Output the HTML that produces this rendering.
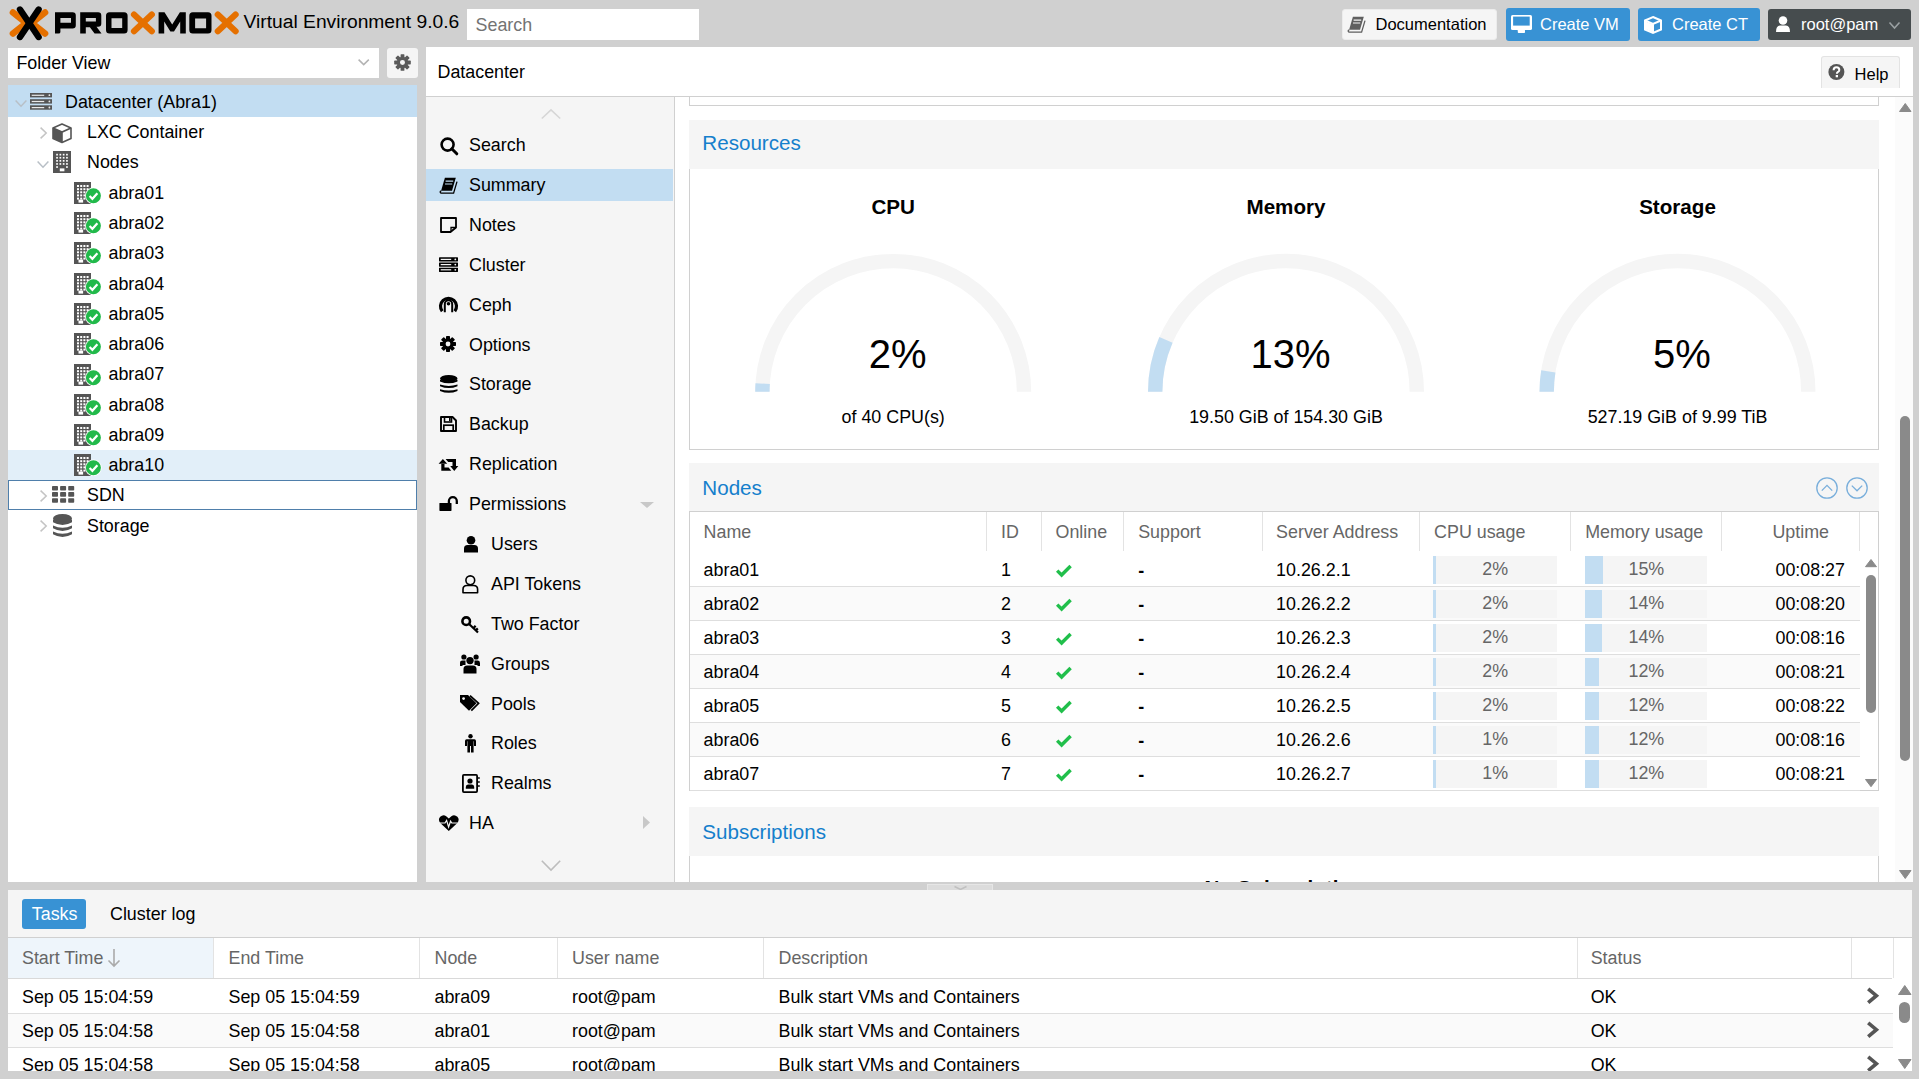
<!DOCTYPE html>
<html><head><meta charset="utf-8"><style>
*{box-sizing:border-box;margin:0;padding:0}
html,body{width:1919px;height:1079px;overflow:hidden;background:#d0d0d0;font-family:"Liberation Sans",sans-serif;font-size:17.875px;color:#000}
.abs{position:absolute}
.t{position:absolute;white-space:nowrap;line-height:1}
svg{position:absolute;overflow:visible}
</style></head><body>
<svg style="left:0px;top:0px;" width="240" height="47" viewBox="0 0 240 47">
<g fill="none" stroke-linecap="round">
<path d="M13 12.5 L26.2 23 L13 33.5" stroke="#e57000" stroke-width="6.6" stroke-linejoin="miter"/>
<path d="M45 12.5 L31.8 23 L45 33.5" stroke="#e57000" stroke-width="6.6" stroke-linejoin="miter"/>
<path d="M20 9.5 L38.6 37" stroke="#000" stroke-width="6.4"/>
<path d="M38.6 9.5 L20 37" stroke="#000" stroke-width="6.4"/>
</g>
<g fill="#000" fill-rule="evenodd">
<path d="M55 12.3 H72.6 Q75.8 12.3 75.8 15.5 V25.2 Q75.8 28.4 72.6 28.4 H60.4 V32 Q60.4 33.6 58.5 33.6 H55 Z M60.4 18 V22.7 H71 V18 Z"/>
<path d="M80.2 12.3 H98.1 Q101.3 12.3 101.3 15.5 V23.6 Q101.3 26.8 98.1 26.8 H96.5 L101.5 33.6 H94.6 L89.9 27.2 H85.8 V33.6 H80.2 Z M85.8 18 V21.6 H95.9 V18 Z"/>
<path d="M109.5 12.3 H124.1 Q127.6 12.3 127.6 15.8 V30.1 Q127.6 33.6 124.1 33.6 H109.5 Q106 33.6 106 30.1 V15.8 Q106 12.3 109.5 12.3 Z M111.5 18.2 V27.9 H122.2 V18.2 Z"/>
<path d="M158.6 12.3 H164.5 L172.2 24.5 L179.9 12.3 H185.8 V33.6 H180.2 V21.5 L174 31.6 H170.4 L164.2 21.5 V33.6 H158.6 Z"/>
<path d="M192.8 12.3 H208 Q211.5 12.3 211.5 15.8 V30.1 Q211.5 33.6 208 33.6 H192.8 Q189.3 33.6 189.3 30.1 V15.8 Q189.3 12.3 192.8 12.3 Z M195.1 18.4 V28.3 H206.1 V18.4 Z"/>
</g>
<g fill="none" stroke="#e57000" stroke-width="6.2" stroke-linecap="round">
<path d="M134 14.6 L151.8 31.2 M151.8 14.6 L134 31.2"/>
<path d="M217.8 14.6 L235.6 31.2 M235.6 14.6 L217.8 31.2"/>
</g>
</svg>
<div class="t" style="left:243.5px;top:12px;font-size:19.25px;">Virtual Environment 9.0.6</div>
<div class="abs" style="left:467px;top:9px;width:232px;height:31px;background:#fff;"></div>
<div class="t" style="left:475.6px;top:16.5px;color:#737373;">Search</div>
<div class="abs" style="left:1342px;top:9px;width:155px;height:31px;background:#f5f5f5;border-radius:3px;border:1px solid #ececec"></div>
<svg style="left:1347px;top:15.5px;" width="18" height="17" viewBox="0 0 18 17"><path d="M5.9 0.7 H16.8 L13 13.8 H2.1 Z" fill="#5f5f5f"/><path d="M2.3 13.8 Q0.9 14.2 1.2 15.3 Q1.5 16.1 2.4 16.1 H14.6 L18 4.6" fill="none" stroke="#5f5f5f" stroke-width="1.3"/><path d="M6.6 4.1 H14.2 M6 7 H13.2" stroke="#f5f5f5" stroke-width="1.2"/></svg>
<div class="t" style="left:1375.5px;top:16px;font-size:16.5px;">Documentation</div>
<div class="abs" style="left:1506px;top:8px;width:124px;height:33px;background:#3892d4;border-radius:3px"></div>
<svg style="left:1511.1px;top:14.7px;" width="21" height="18" viewBox="0 0 21 18"><rect x="0" y="0" width="21" height="15" rx="1.6" fill="#fff"/><rect x="2.1" y="1.6" width="16.6" height="9" fill="#3892d4"/><rect x="6.8" y="14.5" width="7.2" height="3.6" rx="0.8" fill="#fff"/></svg>
<div class="t" style="left:1540px;top:16px;font-size:16.5px;color:#fff;">Create VM</div>
<div class="abs" style="left:1638px;top:8px;width:122px;height:33px;background:#3892d4;border-radius:3px"></div>
<svg style="left:1644px;top:16px;" width="18" height="18" viewBox="0 0 18 18"><path d="M9 1 L17 4.5 V13.5 L9 17 L1 13.5 V4.5 Z" fill="none" stroke="#fff" stroke-width="2"/><path d="M1 4.5 L9 8 L17 4.5 M9 8 V17" fill="none" stroke="#fff" stroke-width="2"/><path d="M1.5 5.5 L9 8.5 V16.5 L1.5 13 Z" fill="#fff"/></svg>
<div class="t" style="left:1672px;top:16px;font-size:16.5px;color:#fff;">Create CT</div>
<div class="abs" style="left:1768px;top:9px;width:143px;height:31px;background:#464c4e;border-radius:3px"></div>
<svg style="left:1776px;top:16px;" width="14" height="16" viewBox="0 0 14 16"><circle cx="7" cy="4.5" r="4.3" fill="#fff"/><path d="M0 16 Q0 9.5 4 9.5 L10 9.5 Q14 9.5 14 16 Z" fill="#fff"/></svg>
<div class="t" style="left:1801px;top:16px;font-size:16.5px;color:#fff;">root@pam</div>
<svg style="left:1889px;top:22px;" width="11" height="7" viewBox="0 0 11 7"><path d="M0.5 0.5 L5.5 6 L10.5 0.5" fill="none" stroke="#9aa0a2" stroke-width="1.6"/></svg>
<div class="abs" style="left:8px;top:48px;width:371px;height:30px;background:#fff;"></div>
<div class="t" style="left:16.4px;top:54.5px;">Folder View</div>
<svg style="left:357.7px;top:58.7px;" width="12" height="7" viewBox="0 0 12 7"><path d="M0.6 0.6 L5.7 5.6 L10.8 0.6" fill="none" stroke="#b3b3b3" stroke-width="1.5"/></svg>
<div class="abs" style="left:387px;top:48px;width:31px;height:30px;background:#f5f5f5;border-radius:3px"></div>
<svg style="left:394px;top:53.5px;" width="17" height="17" viewBox="0 0 17 17"><rect x="6.6" y="0.1999999999999993" width="3.8" height="4.15" rx="0.6" fill="#5a5a5a" transform="rotate(0 8.5 8.5)"/><rect x="6.6" y="0.1999999999999993" width="3.8" height="4.15" rx="0.6" fill="#5a5a5a" transform="rotate(45 8.5 8.5)"/><rect x="6.6" y="0.1999999999999993" width="3.8" height="4.15" rx="0.6" fill="#5a5a5a" transform="rotate(90 8.5 8.5)"/><rect x="6.6" y="0.1999999999999993" width="3.8" height="4.15" rx="0.6" fill="#5a5a5a" transform="rotate(135 8.5 8.5)"/><rect x="6.6" y="0.1999999999999993" width="3.8" height="4.15" rx="0.6" fill="#5a5a5a" transform="rotate(180 8.5 8.5)"/><rect x="6.6" y="0.1999999999999993" width="3.8" height="4.15" rx="0.6" fill="#5a5a5a" transform="rotate(225 8.5 8.5)"/><rect x="6.6" y="0.1999999999999993" width="3.8" height="4.15" rx="0.6" fill="#5a5a5a" transform="rotate(270 8.5 8.5)"/><rect x="6.6" y="0.1999999999999993" width="3.8" height="4.15" rx="0.6" fill="#5a5a5a" transform="rotate(315 8.5 8.5)"/><circle cx="8.5" cy="8.5" r="5.644000000000001" fill="#5a5a5a"/><circle cx="8.5" cy="8.5" r="2.49" fill="#f5f5f5"/></svg>
<div class="abs" style="left:8px;top:85px;width:409px;height:797px;background:#fff;"></div>
<div class="abs" style="left:8px;top:85px;width:409px;height:31.5px;background:#c2ddf2;"></div>
<div class="abs" style="left:8px;top:449.5px;width:409px;height:30.25px;background:#e2eff9;"></div>
<div class="abs" style="left:8px;top:479.95px;width:409px;height:30.2px;background:transparent;border:1px solid #4f7fab"></div>
<svg style="left:15px;top:100px;" width="12" height="7" viewBox="0 0 12 7"><path d="M0.6 0.6 L6 6.2 L11.4 0.6" fill="none" stroke="#b8bfc6" stroke-width="1.5"/></svg>
<svg style="left:30px;top:93px;" width="22" height="17" viewBox="0 0 22 17"><rect x="0" y="0" width="22" height="4.4" fill="#555"/><rect x="1.7" y="1.7" width="12.5" height="1.2" fill="#e8e8e8"/><circle cx="19.4" cy="2.2" r="0.9" fill="#e8e8e8"/><rect x="0" y="6.2" width="22" height="4.4" fill="#555"/><rect x="1.7" y="7.9" width="12.5" height="1.2" fill="#e8e8e8"/><circle cx="19.4" cy="8.4" r="0.9" fill="#e8e8e8"/><rect x="0" y="12.3" width="22" height="4.4" fill="#555"/><rect x="1.7" y="14.0" width="12.5" height="1.2" fill="#e8e8e8"/><circle cx="19.4" cy="14.5" r="0.9" fill="#e8e8e8"/></svg>
<div class="t" style="left:65px;top:94px;">Datacenter (Abra1)</div>
<svg style="left:39.5px;top:127px;" width="7" height="12" viewBox="0 0 7 12"><path d="M0.6 0.6 L6.2 6 L0.6 11.4" fill="none" stroke="#c4c4c4" stroke-width="1.5"/></svg>
<svg style="left:52px;top:123px;" width="20" height="20" viewBox="0 0 20 20"><path d="M10 1 L19 5 V15.5 L10 19.5 L1 15.5 V5 Z" fill="#fff" stroke="#555" stroke-width="1.6" stroke-linejoin="round"/><path d="M1 5 L10 9 L19 5 M10 9 V19.5" fill="none" stroke="#555" stroke-width="1.6"/><path d="M1 5 L10 9 V19.5 L1 15.5 Z" fill="#555"/></svg>
<div class="t" style="left:87px;top:124.25px;">LXC Container</div>
<svg style="left:37px;top:161px;" width="12" height="7" viewBox="0 0 12 7"><path d="M0.6 0.6 L6 6.2 L11.4 0.6" fill="none" stroke="#b8bfc6" stroke-width="1.5"/></svg>
<svg style="left:53px;top:151px;" width="18" height="22" viewBox="0 0 18 22"><rect x="0" y="0" width="18" height="22" fill="#555"/><rect x="3.20" y="2.80" width="1.7" height="1.7" fill="#fff"/><rect x="6.50" y="2.80" width="1.7" height="1.7" fill="#fff"/><rect x="9.80" y="2.80" width="1.7" height="1.7" fill="#fff"/><rect x="13.10" y="2.80" width="1.7" height="1.7" fill="#fff"/><rect x="3.20" y="5.90" width="1.7" height="1.7" fill="#fff"/><rect x="6.50" y="5.90" width="1.7" height="1.7" fill="#fff"/><rect x="9.80" y="5.90" width="1.7" height="1.7" fill="#fff"/><rect x="13.10" y="5.90" width="1.7" height="1.7" fill="#fff"/><rect x="3.20" y="9.00" width="1.7" height="1.7" fill="#fff"/><rect x="6.50" y="9.00" width="1.7" height="1.7" fill="#fff"/><rect x="9.80" y="9.00" width="1.7" height="1.7" fill="#fff"/><rect x="13.10" y="9.00" width="1.7" height="1.7" fill="#fff"/><rect x="3.20" y="12.10" width="1.7" height="1.7" fill="#fff"/><rect x="6.50" y="12.10" width="1.7" height="1.7" fill="#fff"/><rect x="9.80" y="12.10" width="1.7" height="1.7" fill="#fff"/><rect x="13.10" y="12.10" width="1.7" height="1.7" fill="#fff"/><rect x="3.20" y="15.20" width="1.7" height="1.7" fill="#fff"/><rect x="13.10" y="15.20" width="1.7" height="1.7" fill="#fff"/><rect x="6.8" y="17.4" width="4.6" height="2.9" fill="#fff"/></svg>
<div class="t" style="left:87px;top:153.7px;">Nodes</div>
<svg style="left:74px;top:182px;" width="27" height="22" viewBox="0 0 27 22"><rect x="0" y="0" width="17" height="22" fill="#555"/><rect x="3.0" y="3.0" width="2" height="2" fill="#fff"/><rect x="6.2" y="3.0" width="2" height="2" fill="#fff"/><rect x="9.4" y="3.0" width="2" height="2" fill="#fff"/><rect x="12.6" y="3.0" width="2" height="2" fill="#fff"/><rect x="3.0" y="6.2" width="2" height="2" fill="#fff"/><rect x="6.2" y="6.2" width="2" height="2" fill="#fff"/><rect x="9.4" y="6.2" width="2" height="2" fill="#fff"/><rect x="12.6" y="6.2" width="2" height="2" fill="#fff"/><rect x="3.0" y="9.3" width="2" height="2" fill="#fff"/><rect x="6.2" y="9.3" width="2" height="2" fill="#fff"/><rect x="9.4" y="9.3" width="2" height="2" fill="#fff"/><rect x="12.6" y="9.3" width="2" height="2" fill="#fff"/><rect x="3.0" y="12.4" width="2" height="2" fill="#fff"/><rect x="6.2" y="12.4" width="2" height="2" fill="#fff"/><rect x="9.4" y="12.4" width="2" height="2" fill="#fff"/><rect x="3.0" y="15.6" width="2" height="2" fill="#fff"/><rect x="6.2" y="15.6" width="2" height="2" fill="#fff"/><rect x="9.4" y="15.6" width="2" height="2" fill="#fff"/><rect x="4.5" y="17.6" width="4.6" height="3" fill="#fff"/><circle cx="19.4" cy="13.8" r="8.3" fill="#fff"/><circle cx="19.4" cy="13.8" r="7.5" fill="#21b94a"/><path d="M15.6 14 L18.4 16.8 L23.4 11.2" fill="none" stroke="#fff" stroke-width="2.2"/></svg>
<div class="t" style="left:108.5px;top:184.75px;">abra01</div>
<svg style="left:74px;top:212px;" width="27" height="22" viewBox="0 0 27 22"><rect x="0" y="0" width="17" height="22" fill="#555"/><rect x="3.0" y="3.0" width="2" height="2" fill="#fff"/><rect x="6.2" y="3.0" width="2" height="2" fill="#fff"/><rect x="9.4" y="3.0" width="2" height="2" fill="#fff"/><rect x="12.6" y="3.0" width="2" height="2" fill="#fff"/><rect x="3.0" y="6.2" width="2" height="2" fill="#fff"/><rect x="6.2" y="6.2" width="2" height="2" fill="#fff"/><rect x="9.4" y="6.2" width="2" height="2" fill="#fff"/><rect x="12.6" y="6.2" width="2" height="2" fill="#fff"/><rect x="3.0" y="9.3" width="2" height="2" fill="#fff"/><rect x="6.2" y="9.3" width="2" height="2" fill="#fff"/><rect x="9.4" y="9.3" width="2" height="2" fill="#fff"/><rect x="12.6" y="9.3" width="2" height="2" fill="#fff"/><rect x="3.0" y="12.4" width="2" height="2" fill="#fff"/><rect x="6.2" y="12.4" width="2" height="2" fill="#fff"/><rect x="9.4" y="12.4" width="2" height="2" fill="#fff"/><rect x="3.0" y="15.6" width="2" height="2" fill="#fff"/><rect x="6.2" y="15.6" width="2" height="2" fill="#fff"/><rect x="9.4" y="15.6" width="2" height="2" fill="#fff"/><rect x="4.5" y="17.6" width="4.6" height="3" fill="#fff"/><circle cx="19.4" cy="13.8" r="8.3" fill="#fff"/><circle cx="19.4" cy="13.8" r="7.5" fill="#21b94a"/><path d="M15.6 14 L18.4 16.8 L23.4 11.2" fill="none" stroke="#fff" stroke-width="2.2"/></svg>
<div class="t" style="left:108.5px;top:215.0px;">abra02</div>
<svg style="left:74px;top:242px;" width="27" height="22" viewBox="0 0 27 22"><rect x="0" y="0" width="17" height="22" fill="#555"/><rect x="3.0" y="3.0" width="2" height="2" fill="#fff"/><rect x="6.2" y="3.0" width="2" height="2" fill="#fff"/><rect x="9.4" y="3.0" width="2" height="2" fill="#fff"/><rect x="12.6" y="3.0" width="2" height="2" fill="#fff"/><rect x="3.0" y="6.2" width="2" height="2" fill="#fff"/><rect x="6.2" y="6.2" width="2" height="2" fill="#fff"/><rect x="9.4" y="6.2" width="2" height="2" fill="#fff"/><rect x="12.6" y="6.2" width="2" height="2" fill="#fff"/><rect x="3.0" y="9.3" width="2" height="2" fill="#fff"/><rect x="6.2" y="9.3" width="2" height="2" fill="#fff"/><rect x="9.4" y="9.3" width="2" height="2" fill="#fff"/><rect x="12.6" y="9.3" width="2" height="2" fill="#fff"/><rect x="3.0" y="12.4" width="2" height="2" fill="#fff"/><rect x="6.2" y="12.4" width="2" height="2" fill="#fff"/><rect x="9.4" y="12.4" width="2" height="2" fill="#fff"/><rect x="3.0" y="15.6" width="2" height="2" fill="#fff"/><rect x="6.2" y="15.6" width="2" height="2" fill="#fff"/><rect x="9.4" y="15.6" width="2" height="2" fill="#fff"/><rect x="4.5" y="17.6" width="4.6" height="3" fill="#fff"/><circle cx="19.4" cy="13.8" r="8.3" fill="#fff"/><circle cx="19.4" cy="13.8" r="7.5" fill="#21b94a"/><path d="M15.6 14 L18.4 16.8 L23.4 11.2" fill="none" stroke="#fff" stroke-width="2.2"/></svg>
<div class="t" style="left:108.5px;top:245.25px;">abra03</div>
<svg style="left:74px;top:273px;" width="27" height="22" viewBox="0 0 27 22"><rect x="0" y="0" width="17" height="22" fill="#555"/><rect x="3.0" y="3.0" width="2" height="2" fill="#fff"/><rect x="6.2" y="3.0" width="2" height="2" fill="#fff"/><rect x="9.4" y="3.0" width="2" height="2" fill="#fff"/><rect x="12.6" y="3.0" width="2" height="2" fill="#fff"/><rect x="3.0" y="6.2" width="2" height="2" fill="#fff"/><rect x="6.2" y="6.2" width="2" height="2" fill="#fff"/><rect x="9.4" y="6.2" width="2" height="2" fill="#fff"/><rect x="12.6" y="6.2" width="2" height="2" fill="#fff"/><rect x="3.0" y="9.3" width="2" height="2" fill="#fff"/><rect x="6.2" y="9.3" width="2" height="2" fill="#fff"/><rect x="9.4" y="9.3" width="2" height="2" fill="#fff"/><rect x="12.6" y="9.3" width="2" height="2" fill="#fff"/><rect x="3.0" y="12.4" width="2" height="2" fill="#fff"/><rect x="6.2" y="12.4" width="2" height="2" fill="#fff"/><rect x="9.4" y="12.4" width="2" height="2" fill="#fff"/><rect x="3.0" y="15.6" width="2" height="2" fill="#fff"/><rect x="6.2" y="15.6" width="2" height="2" fill="#fff"/><rect x="9.4" y="15.6" width="2" height="2" fill="#fff"/><rect x="4.5" y="17.6" width="4.6" height="3" fill="#fff"/><circle cx="19.4" cy="13.8" r="8.3" fill="#fff"/><circle cx="19.4" cy="13.8" r="7.5" fill="#21b94a"/><path d="M15.6 14 L18.4 16.8 L23.4 11.2" fill="none" stroke="#fff" stroke-width="2.2"/></svg>
<div class="t" style="left:108.5px;top:275.5px;">abra04</div>
<svg style="left:74px;top:303px;" width="27" height="22" viewBox="0 0 27 22"><rect x="0" y="0" width="17" height="22" fill="#555"/><rect x="3.0" y="3.0" width="2" height="2" fill="#fff"/><rect x="6.2" y="3.0" width="2" height="2" fill="#fff"/><rect x="9.4" y="3.0" width="2" height="2" fill="#fff"/><rect x="12.6" y="3.0" width="2" height="2" fill="#fff"/><rect x="3.0" y="6.2" width="2" height="2" fill="#fff"/><rect x="6.2" y="6.2" width="2" height="2" fill="#fff"/><rect x="9.4" y="6.2" width="2" height="2" fill="#fff"/><rect x="12.6" y="6.2" width="2" height="2" fill="#fff"/><rect x="3.0" y="9.3" width="2" height="2" fill="#fff"/><rect x="6.2" y="9.3" width="2" height="2" fill="#fff"/><rect x="9.4" y="9.3" width="2" height="2" fill="#fff"/><rect x="12.6" y="9.3" width="2" height="2" fill="#fff"/><rect x="3.0" y="12.4" width="2" height="2" fill="#fff"/><rect x="6.2" y="12.4" width="2" height="2" fill="#fff"/><rect x="9.4" y="12.4" width="2" height="2" fill="#fff"/><rect x="3.0" y="15.6" width="2" height="2" fill="#fff"/><rect x="6.2" y="15.6" width="2" height="2" fill="#fff"/><rect x="9.4" y="15.6" width="2" height="2" fill="#fff"/><rect x="4.5" y="17.6" width="4.6" height="3" fill="#fff"/><circle cx="19.4" cy="13.8" r="8.3" fill="#fff"/><circle cx="19.4" cy="13.8" r="7.5" fill="#21b94a"/><path d="M15.6 14 L18.4 16.8 L23.4 11.2" fill="none" stroke="#fff" stroke-width="2.2"/></svg>
<div class="t" style="left:108.5px;top:305.75px;">abra05</div>
<svg style="left:74px;top:333px;" width="27" height="22" viewBox="0 0 27 22"><rect x="0" y="0" width="17" height="22" fill="#555"/><rect x="3.0" y="3.0" width="2" height="2" fill="#fff"/><rect x="6.2" y="3.0" width="2" height="2" fill="#fff"/><rect x="9.4" y="3.0" width="2" height="2" fill="#fff"/><rect x="12.6" y="3.0" width="2" height="2" fill="#fff"/><rect x="3.0" y="6.2" width="2" height="2" fill="#fff"/><rect x="6.2" y="6.2" width="2" height="2" fill="#fff"/><rect x="9.4" y="6.2" width="2" height="2" fill="#fff"/><rect x="12.6" y="6.2" width="2" height="2" fill="#fff"/><rect x="3.0" y="9.3" width="2" height="2" fill="#fff"/><rect x="6.2" y="9.3" width="2" height="2" fill="#fff"/><rect x="9.4" y="9.3" width="2" height="2" fill="#fff"/><rect x="12.6" y="9.3" width="2" height="2" fill="#fff"/><rect x="3.0" y="12.4" width="2" height="2" fill="#fff"/><rect x="6.2" y="12.4" width="2" height="2" fill="#fff"/><rect x="9.4" y="12.4" width="2" height="2" fill="#fff"/><rect x="3.0" y="15.6" width="2" height="2" fill="#fff"/><rect x="6.2" y="15.6" width="2" height="2" fill="#fff"/><rect x="9.4" y="15.6" width="2" height="2" fill="#fff"/><rect x="4.5" y="17.6" width="4.6" height="3" fill="#fff"/><circle cx="19.4" cy="13.8" r="8.3" fill="#fff"/><circle cx="19.4" cy="13.8" r="7.5" fill="#21b94a"/><path d="M15.6 14 L18.4 16.8 L23.4 11.2" fill="none" stroke="#fff" stroke-width="2.2"/></svg>
<div class="t" style="left:108.5px;top:336.0px;">abra06</div>
<svg style="left:74px;top:364px;" width="27" height="22" viewBox="0 0 27 22"><rect x="0" y="0" width="17" height="22" fill="#555"/><rect x="3.0" y="3.0" width="2" height="2" fill="#fff"/><rect x="6.2" y="3.0" width="2" height="2" fill="#fff"/><rect x="9.4" y="3.0" width="2" height="2" fill="#fff"/><rect x="12.6" y="3.0" width="2" height="2" fill="#fff"/><rect x="3.0" y="6.2" width="2" height="2" fill="#fff"/><rect x="6.2" y="6.2" width="2" height="2" fill="#fff"/><rect x="9.4" y="6.2" width="2" height="2" fill="#fff"/><rect x="12.6" y="6.2" width="2" height="2" fill="#fff"/><rect x="3.0" y="9.3" width="2" height="2" fill="#fff"/><rect x="6.2" y="9.3" width="2" height="2" fill="#fff"/><rect x="9.4" y="9.3" width="2" height="2" fill="#fff"/><rect x="12.6" y="9.3" width="2" height="2" fill="#fff"/><rect x="3.0" y="12.4" width="2" height="2" fill="#fff"/><rect x="6.2" y="12.4" width="2" height="2" fill="#fff"/><rect x="9.4" y="12.4" width="2" height="2" fill="#fff"/><rect x="3.0" y="15.6" width="2" height="2" fill="#fff"/><rect x="6.2" y="15.6" width="2" height="2" fill="#fff"/><rect x="9.4" y="15.6" width="2" height="2" fill="#fff"/><rect x="4.5" y="17.6" width="4.6" height="3" fill="#fff"/><circle cx="19.4" cy="13.8" r="8.3" fill="#fff"/><circle cx="19.4" cy="13.8" r="7.5" fill="#21b94a"/><path d="M15.6 14 L18.4 16.8 L23.4 11.2" fill="none" stroke="#fff" stroke-width="2.2"/></svg>
<div class="t" style="left:108.5px;top:366.25px;">abra07</div>
<svg style="left:74px;top:394px;" width="27" height="22" viewBox="0 0 27 22"><rect x="0" y="0" width="17" height="22" fill="#555"/><rect x="3.0" y="3.0" width="2" height="2" fill="#fff"/><rect x="6.2" y="3.0" width="2" height="2" fill="#fff"/><rect x="9.4" y="3.0" width="2" height="2" fill="#fff"/><rect x="12.6" y="3.0" width="2" height="2" fill="#fff"/><rect x="3.0" y="6.2" width="2" height="2" fill="#fff"/><rect x="6.2" y="6.2" width="2" height="2" fill="#fff"/><rect x="9.4" y="6.2" width="2" height="2" fill="#fff"/><rect x="12.6" y="6.2" width="2" height="2" fill="#fff"/><rect x="3.0" y="9.3" width="2" height="2" fill="#fff"/><rect x="6.2" y="9.3" width="2" height="2" fill="#fff"/><rect x="9.4" y="9.3" width="2" height="2" fill="#fff"/><rect x="12.6" y="9.3" width="2" height="2" fill="#fff"/><rect x="3.0" y="12.4" width="2" height="2" fill="#fff"/><rect x="6.2" y="12.4" width="2" height="2" fill="#fff"/><rect x="9.4" y="12.4" width="2" height="2" fill="#fff"/><rect x="3.0" y="15.6" width="2" height="2" fill="#fff"/><rect x="6.2" y="15.6" width="2" height="2" fill="#fff"/><rect x="9.4" y="15.6" width="2" height="2" fill="#fff"/><rect x="4.5" y="17.6" width="4.6" height="3" fill="#fff"/><circle cx="19.4" cy="13.8" r="8.3" fill="#fff"/><circle cx="19.4" cy="13.8" r="7.5" fill="#21b94a"/><path d="M15.6 14 L18.4 16.8 L23.4 11.2" fill="none" stroke="#fff" stroke-width="2.2"/></svg>
<div class="t" style="left:108.5px;top:396.5px;">abra08</div>
<svg style="left:74px;top:424px;" width="27" height="22" viewBox="0 0 27 22"><rect x="0" y="0" width="17" height="22" fill="#555"/><rect x="3.0" y="3.0" width="2" height="2" fill="#fff"/><rect x="6.2" y="3.0" width="2" height="2" fill="#fff"/><rect x="9.4" y="3.0" width="2" height="2" fill="#fff"/><rect x="12.6" y="3.0" width="2" height="2" fill="#fff"/><rect x="3.0" y="6.2" width="2" height="2" fill="#fff"/><rect x="6.2" y="6.2" width="2" height="2" fill="#fff"/><rect x="9.4" y="6.2" width="2" height="2" fill="#fff"/><rect x="12.6" y="6.2" width="2" height="2" fill="#fff"/><rect x="3.0" y="9.3" width="2" height="2" fill="#fff"/><rect x="6.2" y="9.3" width="2" height="2" fill="#fff"/><rect x="9.4" y="9.3" width="2" height="2" fill="#fff"/><rect x="12.6" y="9.3" width="2" height="2" fill="#fff"/><rect x="3.0" y="12.4" width="2" height="2" fill="#fff"/><rect x="6.2" y="12.4" width="2" height="2" fill="#fff"/><rect x="9.4" y="12.4" width="2" height="2" fill="#fff"/><rect x="3.0" y="15.6" width="2" height="2" fill="#fff"/><rect x="6.2" y="15.6" width="2" height="2" fill="#fff"/><rect x="9.4" y="15.6" width="2" height="2" fill="#fff"/><rect x="4.5" y="17.6" width="4.6" height="3" fill="#fff"/><circle cx="19.4" cy="13.8" r="8.3" fill="#fff"/><circle cx="19.4" cy="13.8" r="7.5" fill="#21b94a"/><path d="M15.6 14 L18.4 16.8 L23.4 11.2" fill="none" stroke="#fff" stroke-width="2.2"/></svg>
<div class="t" style="left:108.5px;top:426.75px;">abra09</div>
<svg style="left:74px;top:454px;" width="27" height="22" viewBox="0 0 27 22"><rect x="0" y="0" width="17" height="22" fill="#555"/><rect x="3.0" y="3.0" width="2" height="2" fill="#fff"/><rect x="6.2" y="3.0" width="2" height="2" fill="#fff"/><rect x="9.4" y="3.0" width="2" height="2" fill="#fff"/><rect x="12.6" y="3.0" width="2" height="2" fill="#fff"/><rect x="3.0" y="6.2" width="2" height="2" fill="#fff"/><rect x="6.2" y="6.2" width="2" height="2" fill="#fff"/><rect x="9.4" y="6.2" width="2" height="2" fill="#fff"/><rect x="12.6" y="6.2" width="2" height="2" fill="#fff"/><rect x="3.0" y="9.3" width="2" height="2" fill="#fff"/><rect x="6.2" y="9.3" width="2" height="2" fill="#fff"/><rect x="9.4" y="9.3" width="2" height="2" fill="#fff"/><rect x="12.6" y="9.3" width="2" height="2" fill="#fff"/><rect x="3.0" y="12.4" width="2" height="2" fill="#fff"/><rect x="6.2" y="12.4" width="2" height="2" fill="#fff"/><rect x="9.4" y="12.4" width="2" height="2" fill="#fff"/><rect x="3.0" y="15.6" width="2" height="2" fill="#fff"/><rect x="6.2" y="15.6" width="2" height="2" fill="#fff"/><rect x="9.4" y="15.6" width="2" height="2" fill="#fff"/><rect x="4.5" y="17.6" width="4.6" height="3" fill="#fff"/><circle cx="19.4" cy="13.8" r="8.3" fill="#fff"/><circle cx="19.4" cy="13.8" r="7.5" fill="#21b94a"/><path d="M15.6 14 L18.4 16.8 L23.4 11.2" fill="none" stroke="#fff" stroke-width="2.2"/></svg>
<div class="t" style="left:108.5px;top:457.0px;">abra10</div>
<svg style="left:39.7px;top:489.75px;" width="7" height="12" viewBox="0 0 7 12"><path d="M0.6 0.6 L6.2 6 L0.6 11.4" fill="none" stroke="#c4c4c4" stroke-width="1.5"/></svg>
<svg style="left:52px;top:485.75px;" width="22" height="17" viewBox="0 0 22 17"><rect x="0.0" y="0.0" width="6" height="4.6" rx="0.8" fill="#555"/><rect x="8.1" y="0.0" width="6" height="4.6" rx="0.8" fill="#555"/><rect x="16.2" y="0.0" width="6" height="4.6" rx="0.8" fill="#555"/><rect x="0.0" y="6.1" width="6" height="4.6" rx="0.8" fill="#555"/><rect x="8.1" y="6.1" width="6" height="4.6" rx="0.8" fill="#555"/><rect x="16.2" y="6.1" width="6" height="4.6" rx="0.8" fill="#555"/><rect x="0.0" y="12.2" width="6" height="4.6" rx="0.8" fill="#555"/><rect x="8.1" y="12.2" width="6" height="4.6" rx="0.8" fill="#555"/><rect x="16.2" y="12.2" width="6" height="4.6" rx="0.8" fill="#555"/></svg>
<div class="t" style="left:87px;top:487.25px;">SDN</div>
<svg style="left:39.7px;top:520.0px;" width="7" height="12" viewBox="0 0 7 12"><path d="M0.6 0.6 L6.2 6 L0.6 11.4" fill="none" stroke="#c4c4c4" stroke-width="1.5"/></svg>
<svg style="left:53px;top:514.0px;" width="19" height="22" viewBox="0 0 19 22"><ellipse cx="9.5" cy="4.4" rx="9.5" ry="4.4" fill="#555"/><path d="M0 5.50 Q9.5 10.34 19 5.50 V8.36 Q9.5 13.86 0 8.36 Z" fill="#555"/><path d="M0 11.44 Q9.5 16.28 19 11.44 V14.30 Q9.5 19.80 0 14.30 Z" fill="#555"/><path d="M0 17.38 Q9.5 22.22 19 17.38 V20.24 Q9.5 25.74 0 20.24 Z" fill="#555"/></svg>
<div class="t" style="left:87px;top:517.5px;">Storage</div>
<div class="abs" style="left:426px;top:47px;width:1487px;height:835px;background:#fff;"></div>
<div class="t" style="left:437.5px;top:64.3px;">Datacenter</div>
<div class="abs" style="left:1821px;top:56px;width:79px;height:32px;background:#f5f5f5;border:1px solid #e3e3e3;border-bottom:none;border-radius:3px 3px 0 0"></div>
<svg style="left:1828.3px;top:63.8px;" width="17" height="16" viewBox="0 0 17 16"><circle cx="8.4" cy="8" r="8" fill="#555"/><path d="M5.6 6.2 Q5.6 3.3 8.5 3.3 Q11.3 3.3 11.3 5.9 Q11.3 7.4 9.7 8.2 Q8.9 8.7 8.9 9.8" fill="none" stroke="#fff" stroke-width="2"/><rect x="7.7" y="11" width="2.3" height="2.3" fill="#fff"/></svg>
<div class="t" style="left:1854.6px;top:65.6px;font-size:16.5px;">Help</div>
<div class="abs" style="left:426px;top:96px;width:1487px;height:1px;background:#d0d0d0;"></div>
<div class="abs" style="left:426px;top:97px;width:248px;height:785px;background:#f5f5f5;"></div>
<div class="abs" style="left:674px;top:97px;width:1px;height:785px;background:#d0d0d0;"></div>
<div class="abs" style="left:426px;top:168.9px;width:247px;height:32.6px;background:#c2ddf2;"></div>
<svg style="left:541px;top:109px;" width="20" height="10" viewBox="0 0 20 10"><path d="M0.8 9.5 L10 0.8 L19.2 9.5" fill="none" stroke="#d6d6d6" stroke-width="1.6"/></svg>
<svg style="left:541px;top:860px;" width="20" height="11" viewBox="0 0 20 11"><path d="M0.8 0.8 L10 10 L19.2 0.8" fill="none" stroke="#bdbdbd" stroke-width="1.6"/></svg>
<svg style="left:439.5px;top:136.7px;" width="18" height="18" viewBox="0 0 18 18"><circle cx="7.6" cy="7.6" r="6" fill="none" stroke="#000" stroke-width="2.6"/><path d="M11.8 11.8 L16.8 16.8" stroke="#000" stroke-width="3" stroke-linecap="round"/></svg>
<div class="t" style="left:469px;top:137.2px;">Search</div>
<svg style="left:438.5px;top:176.6px;" width="18" height="17" viewBox="0 0 18 17"><path d="M5.9 0.7 H16.8 L13 13.8 H2.1 Z" fill="#000"/><path d="M2.3 13.8 Q0.9 14.2 1.2 15.3 Q1.5 16.1 2.4 16.1 H14.6 L18 4.6" fill="none" stroke="#000" stroke-width="1.3"/><path d="M6.6 4.1 H14.2 M6 7 H13.2" stroke="#c2ddf2" stroke-width="1.2"/></svg>
<div class="t" style="left:469px;top:177.08px;">Summary</div>
<svg style="left:440px;top:217.2px;" width="17" height="16" viewBox="0 0 17 16"><path d="M1 1 H16 V10.5 L10.5 15 H1 Z" fill="none" stroke="#000" stroke-width="1.8" stroke-linejoin="round"/><path d="M16 10.5 H11 V15" fill="none" stroke="#000" stroke-width="1.3"/></svg>
<div class="t" style="left:469px;top:216.96px;">Notes</div>
<svg style="left:439px;top:257px;" width="19" height="15" viewBox="0 0 19 15"><rect x="0" y="0.3" width="19" height="4.2" rx="0.4" fill="#000"/><rect x="1.7" y="1.8" width="10.5" height="1.2" fill="#f5f5f5"/><circle cx="16.3" cy="2.4" r="0.9" fill="#f5f5f5"/><rect x="0" y="5.5" width="19" height="4.2" rx="0.4" fill="#000"/><rect x="1.7" y="7.0" width="10.5" height="1.2" fill="#f5f5f5"/><circle cx="16.3" cy="7.6" r="0.9" fill="#f5f5f5"/><rect x="0" y="10.7" width="19" height="4.2" rx="0.4" fill="#000"/><rect x="1.7" y="12.2" width="10.5" height="1.2" fill="#f5f5f5"/><circle cx="16.3" cy="12.799999999999999" r="0.9" fill="#f5f5f5"/></svg>
<div class="t" style="left:469px;top:256.84px;">Cluster</div>
<svg style="left:439px;top:294px;" width="19" height="18.5" viewBox="0 0 19 18.5"><path d="M3.2 17.2 A8 8 0 1 1 15.8 17.2" fill="none" stroke="#000" stroke-width="3.2"/><path d="M5.8 18.2 V10 A3.7 3.7 0 0 1 13.2 10 V18.2" fill="none" stroke="#000" stroke-width="2"/><circle cx="9.5" cy="9.8" r="1.8" fill="#000"/></svg>
<div class="t" style="left:469px;top:296.72px;">Ceph</div>
<svg style="left:440.2px;top:336.2px;" width="16" height="16" viewBox="0 0 16 16"><rect x="6" y="0" width="4" height="4.4" rx="0.7" fill="#000" transform="rotate(0 8 8)"/><rect x="6" y="0" width="4" height="4.4" rx="0.7" fill="#000" transform="rotate(45 8 8)"/><rect x="6" y="0" width="4" height="4.4" rx="0.7" fill="#000" transform="rotate(90 8 8)"/><rect x="6" y="0" width="4" height="4.4" rx="0.7" fill="#000" transform="rotate(135 8 8)"/><rect x="6" y="0" width="4" height="4.4" rx="0.7" fill="#000" transform="rotate(180 8 8)"/><rect x="6" y="0" width="4" height="4.4" rx="0.7" fill="#000" transform="rotate(225 8 8)"/><rect x="6" y="0" width="4" height="4.4" rx="0.7" fill="#000" transform="rotate(270 8 8)"/><rect x="6" y="0" width="4" height="4.4" rx="0.7" fill="#000" transform="rotate(315 8 8)"/><circle cx="8" cy="8" r="5.6" fill="#000"/><circle cx="8" cy="8" r="2.4" fill="#f5f5f5"/></svg>
<div class="t" style="left:469px;top:336.6px;">Options</div>
<svg style="left:439.6px;top:375px;" width="17.5" height="18.6" viewBox="0 0 17.5 18.6"><ellipse cx="8.75" cy="3.5340000000000003" rx="8.75" ry="3.5340000000000003" fill="#000"/><path d="M0 4.65 Q8.75 7.63 17.5 4.65 V6.51 Q8.75 10.23 0 6.51 Z" fill="#000"/><path d="M0 9.39 Q8.75 12.37 17.5 9.39 V11.25 Q8.75 14.97 0 11.25 Z" fill="#000"/><path d="M0 14.14 Q8.75 17.11 17.5 14.14 V16.00 Q8.75 19.72 0 16.00 Z" fill="#000"/></svg>
<div class="t" style="left:469px;top:376.48px;">Storage</div>
<svg style="left:439.6px;top:416px;" width="17" height="16" viewBox="0 0 17 16"><path d="M1 1 H12.5 L16 4.5 V15 H1 Z" fill="none" stroke="#000" stroke-width="1.9" stroke-linejoin="round"/><rect x="4.5" y="1" width="7" height="5" fill="none" stroke="#000" stroke-width="1.6"/><rect x="3.8" y="9.2" width="9.4" height="5.8" fill="none" stroke="#000" stroke-width="1.7"/><rect x="9" y="2" width="1.6" height="3" fill="#000"/></svg>
<div class="t" style="left:469px;top:416.36px;">Backup</div>
<svg style="left:438px;top:459px;" width="21" height="12" viewBox="0 0 21 12"><path d="M3.3 4.4 V11.8 H13.3 L10.6 8.6 H6.5 V4.4 Z M0.6 4.8 L4.9 0 L9.2 4.8 Z M7.6 0 H18 V7.2 H14.5 V3.1 H10.2 Z M12.2 7 H20.3 L16.25 11.9 Z" fill="#000"/></svg>
<div class="t" style="left:469px;top:456.24px;">Replication</div>
<svg style="left:439px;top:496px;" width="18" height="15.5" viewBox="0 0 18 15.5"><rect x="0.4" y="7" width="12.1" height="7.9" rx="0.6" fill="#000"/><path d="M9.9 7.5 V5 A3.95 3.95 0 0 1 17.8 5 V8" fill="none" stroke="#000" stroke-width="2.3"/></svg>
<div class="t" style="left:469px;top:496.12px;">Permissions</div>
<svg style="left:463.5px;top:535.8px;" width="14" height="16.5" viewBox="0 0 14 16.5"><circle cx="7" cy="4.3" r="4.3" fill="#000"/><path d="M0 16.5 V12.5 Q0 9 3.6 9 H10.4 Q14 9 14 12.5 V16.5 Z" fill="#000"/></svg>
<div class="t" style="left:491px;top:536.0px;">Users</div>
<svg style="left:462px;top:574.6px;" width="16.6" height="18.6" viewBox="0 0 16.6 18.6"><circle cx="8.3" cy="5.3" r="4.4" fill="none" stroke="#000" stroke-width="1.6"/><path d="M1 17.7 V14.3 Q1 10.5 5 10.5 H11.6 Q15.6 10.5 15.6 14.3 V17.7 Z" fill="none" stroke="#000" stroke-width="1.6" stroke-linejoin="round"/></svg>
<div class="t" style="left:491px;top:575.88px;">API Tokens</div>
<svg style="left:460.6px;top:615.5px;" width="18" height="16.5" viewBox="0 0 18 16.5"><circle cx="5.2" cy="5.2" r="3.8" fill="none" stroke="#000" stroke-width="2.6"/><path d="M7.8 7.8 L17 16.5 M12.4 12.2 L14.6 9.8 M14.8 14.4 L16.8 12.4" fill="none" stroke="#000" stroke-width="2.2"/></svg>
<div class="t" style="left:491px;top:615.76px;">Two Factor</div>
<svg style="left:460px;top:653.6px;" width="20" height="19.4" viewBox="0 0 20 19.4"><circle cx="10" cy="6.6" r="3.7" fill="#000"/><circle cx="3.9" cy="3" r="2.6" fill="#000"/><circle cx="16.1" cy="3" r="2.6" fill="#000"/><path d="M3.5 19.4 V15 Q3.5 11.5 7 11.5 H13 Q16.5 11.5 16.5 15 V19.4 Z" fill="#000"/><path d="M0 12 V9 Q0 6.5 2.5 6.5 H5.5 V11 H2.5 V12 Z M20 12 V9 Q20 6.5 17.5 6.5 H14.5 V11 H17.5 V12 Z" fill="#000"/></svg>
<div class="t" style="left:491px;top:655.64px;">Groups</div>
<svg style="left:460px;top:695px;" width="20" height="16" viewBox="0 0 20 16"><path d="M0 0 H8 L16.5 8.3 L9 15.8 L0 7 Z" fill="#000"/><circle cx="3.6" cy="3.6" r="1.4" fill="#f5f5f5"/><path d="M10 0.6 L18.6 8.3 L11.3 15.6" fill="none" stroke="#000" stroke-width="1.7"/></svg>
<div class="t" style="left:491px;top:695.52px;">Pools</div>
<svg style="left:464.8px;top:734px;" width="11" height="18.5" viewBox="0 0 11 18.5"><circle cx="5.5" cy="2.2" r="2.2" fill="#000"/><path d="M1.6 5.2 H9.4 Q11 5.2 11 7 V12 H9 V7.2 H8.6 V18.5 H6 V12 H5 V18.5 H2.4 V7.2 H2 V12 H0 V7 Q0 5.2 1.6 5.2 Z" fill="#000"/></svg>
<div class="t" style="left:491px;top:735.4px;">Roles</div>
<svg style="left:461.5px;top:774px;" width="18" height="19" viewBox="0 0 18 19"><rect x="0.9" y="0.9" width="14.2" height="17.2" rx="1" fill="none" stroke="#000" stroke-width="1.8"/><circle cx="8" cy="7" r="2.6" fill="#000"/><path d="M3.8 14.8 V13 Q3.8 10.5 6 10.5 H10 Q12.2 10.5 12.2 13 V14.8 Z" fill="#000"/><path d="M15.5 4 H17.8 M15.5 8 H17.8 M15.5 12 H17.8" stroke="#000" stroke-width="1.6"/></svg>
<div class="t" style="left:491px;top:775.28px;">Realms</div>
<svg style="left:438.5px;top:815px;" width="19.6" height="16" viewBox="0 0 19.6 16"><path d="M9.8 16 L1.5 8.3 Q-1.5 4.8 1.2 1.8 Q4.2 -1 7.2 1.2 L9.8 3.4 L12.4 1.2 Q15.4 -1 18.4 1.8 Q21.1 4.8 18.1 8.3 Z" fill="#000"/><path d="M1 8 H6 L7.6 5.4 L9.6 12 L11.6 6.2 L12.8 8 H18.6" fill="none" stroke="#f5f5f5" stroke-width="1.2"/></svg>
<div class="t" style="left:469px;top:815.16px;">HA</div>
<svg style="left:640px;top:502px;" width="14" height="6" viewBox="0 0 14 6"><path d="M0 0 H14 L7 6 Z" fill="#c8c8c8"/></svg>
<svg style="left:643px;top:816px;" width="7" height="13" viewBox="0 0 7 13"><path d="M0 0 V13 L7 6.5 Z" fill="#c8c8c8"/></svg>
<div class="abs" style="left:689px;top:97px;width:1190px;height:9px;background:#fff;border:1px solid #d0d0d0;border-top:none"></div>
<div class="abs" style="left:689px;top:120px;width:1190px;height:48.5px;background:#f5f5f5;"></div>
<div class="t" style="left:702.3px;top:133px;font-size:20.625px;color:#157fcc;">Resources</div>
<div class="abs" style="left:689px;top:168.5px;width:1190px;height:281px;background:#fff;border:1px solid #d0d0d0;border-top:none"></div>
<div class="t" style="left:743.2px;width:300px;text-align:center;top:197.4px;font-size:20.625px;font-weight:bold">CPU</div>
<svg style="left:0;top:0" width="1919" height="1079" viewBox="0 0 1919 1079"><path d="M762.4000000000001 391.8 A130.8 130.8 0 0 1 1024.0 391.8" fill="none" stroke="#f5f5f5" stroke-width="14.4"/><path d="M762.4000000000001 391.8 A130.8 130.8 0 0 1 762.66 383.59" fill="none" stroke="#c2ddf2" stroke-width="14.4"/></svg>
<div class="t" style="left:747.7px;width:300px;text-align:center;top:334px;font-size:40px">2%</div>
<div class="t" style="left:693.2px;width:400px;text-align:center;top:408.6px">of 40 CPU(s)</div>
<div class="t" style="left:1136px;width:300px;text-align:center;top:197.4px;font-size:20.625px;font-weight:bold">Memory</div>
<svg style="left:0;top:0" width="1919" height="1079" viewBox="0 0 1919 1079"><path d="M1155.2 391.8 A130.8 130.8 0 0 1 1416.8 391.8" fill="none" stroke="#f5f5f5" stroke-width="14.4"/><path d="M1155.2 391.8 A130.8 130.8 0 0 1 1165.96 339.85" fill="none" stroke="#c2ddf2" stroke-width="14.4"/></svg>
<div class="t" style="left:1140.5px;width:300px;text-align:center;top:334px;font-size:40px">13%</div>
<div class="t" style="left:1086px;width:400px;text-align:center;top:408.6px">19.50 GiB of 154.30 GiB</div>
<div class="t" style="left:1527.5px;width:300px;text-align:center;top:197.4px;font-size:20.625px;font-weight:bold">Storage</div>
<svg style="left:0;top:0" width="1919" height="1079" viewBox="0 0 1919 1079"><path d="M1546.7 391.8 A130.8 130.8 0 0 1 1808.3 391.8" fill="none" stroke="#f5f5f5" stroke-width="14.4"/><path d="M1546.7 391.8 A130.8 130.8 0 0 1 1548.31 371.34" fill="none" stroke="#c2ddf2" stroke-width="14.4"/></svg>
<div class="t" style="left:1532.0px;width:300px;text-align:center;top:334px;font-size:40px">5%</div>
<div class="t" style="left:1477.5px;width:400px;text-align:center;top:408.6px">527.19 GiB of 9.99 TiB</div>
<div class="abs" style="left:689px;top:463px;width:1190px;height:48.19999999999999px;background:#f5f5f5;"></div>
<div class="t" style="left:702.3px;top:478.3px;font-size:20.625px;color:#157fcc;">Nodes</div>
<svg style="left:1815.8px;top:476.5px;" width="22" height="22" viewBox="0 0 22 22"><circle cx="11" cy="11" r="10.2" fill="none" stroke="#78aedb" stroke-width="1.3"/><path d="M5.8 13.6 L11 8.4 L16.2 13.6" fill="none" stroke="#78aedb" stroke-width="1.3"/></svg>
<svg style="left:1845.8px;top:476.5px;" width="22" height="22" viewBox="0 0 22 22"><circle cx="11" cy="11" r="10.2" fill="none" stroke="#78aedb" stroke-width="1.3"/><path d="M5.8 8.6 L11 13.8 L16.2 8.6" fill="none" stroke="#78aedb" stroke-width="1.3"/></svg>
<div class="abs" style="left:689px;top:511.2px;width:1190px;height:280px;background:#fff;border:1px solid #d0d0d0;"></div>
<div class="abs" style="left:986.3px;top:512px;width:1px;height:39px;background:#e3e3e3;"></div>
<div class="abs" style="left:1041.2px;top:512px;width:1px;height:39px;background:#e3e3e3;"></div>
<div class="abs" style="left:1123.3px;top:512px;width:1px;height:39px;background:#e3e3e3;"></div>
<div class="abs" style="left:1261.6px;top:512px;width:1px;height:39px;background:#e3e3e3;"></div>
<div class="abs" style="left:1419px;top:512px;width:1px;height:39px;background:#e3e3e3;"></div>
<div class="abs" style="left:1570.1px;top:512px;width:1px;height:39px;background:#e3e3e3;"></div>
<div class="abs" style="left:1721.2px;top:512px;width:1px;height:39px;background:#e3e3e3;"></div>
<div class="abs" style="left:1859.2px;top:512px;width:1px;height:39px;background:#e3e3e3;"></div>
<div class="t" style="left:703.6px;top:523.9px;color:#666;">Name</div>
<div class="t" style="left:1001px;top:523.9px;color:#666;">ID</div>
<div class="t" style="left:1055.5px;top:523.9px;color:#666;">Online</div>
<div class="t" style="left:1138.2px;top:523.9px;color:#666;">Support</div>
<div class="t" style="left:1276.1px;top:523.9px;color:#666;">Server Address</div>
<div class="t" style="left:1434.1px;top:523.9px;color:#666;">CPU usage</div>
<div class="t" style="left:1585.2px;top:523.9px;color:#666;">Memory usage</div>
<div class="t" style="left:1772.4px;top:523.9px;color:#666;">Uptime</div>
<div class="abs" style="left:690px;top:586px;width:1170px;height:1px;background:#dedede;"></div>
<div class="t" style="left:703.6px;top:561.7px;">abra01</div>
<div class="t" style="left:1001px;top:561.7px;">1</div>
<svg style="left:1056.4px;top:563.5px;" width="15.5" height="12.5" viewBox="0 0 15.5 12.5"><path d="M1.2 6.6 L5.6 11 L14.6 2" fill="none" stroke="#21bf4b" stroke-width="3.4"/></svg>
<div class="t" style="left:1138.2px;top:562.9000000000001px;font-weight:bold">-</div>
<div class="t" style="left:1276.1px;top:561.7px;">10.26.2.1</div>
<div class="abs" style="left:1433.4px;top:556.3px;width:123.6px;height:27.4px;background:#f5f5f5;"></div>
<div class="abs" style="left:1433.4px;top:556.3px;width:2.5px;height:27.4px;background:#c2ddf2;"></div>
<div class="t" style="left:1433.4px;width:123.6px;text-align:center;top:560.7px;color:#666">2%</div>
<div class="abs" style="left:1585.2px;top:556.3px;width:122.3px;height:27.4px;background:#f5f5f5;"></div>
<div class="abs" style="left:1585.2px;top:556.3px;width:17.5px;height:27.4px;background:#c2ddf2;"></div>
<div class="t" style="left:1585.2px;width:122.3px;text-align:center;top:560.7px;color:#666">15%</div>
<div class="t" style="left:1700px;width:145px;text-align:right;top:561.7px">00:08:27</div>
<div class="abs" style="left:690px;top:587px;width:1170px;height:33px;background:#fafafa;"></div>
<div class="abs" style="left:690px;top:620px;width:1170px;height:1px;background:#dedede;"></div>
<div class="t" style="left:703.6px;top:595.7px;">abra02</div>
<div class="t" style="left:1001px;top:595.7px;">2</div>
<svg style="left:1056.4px;top:597.5px;" width="15.5" height="12.5" viewBox="0 0 15.5 12.5"><path d="M1.2 6.6 L5.6 11 L14.6 2" fill="none" stroke="#21bf4b" stroke-width="3.4"/></svg>
<div class="t" style="left:1138.2px;top:596.9000000000001px;font-weight:bold">-</div>
<div class="t" style="left:1276.1px;top:595.7px;">10.26.2.2</div>
<div class="abs" style="left:1433.4px;top:590.3px;width:123.6px;height:27.4px;background:#f5f5f5;"></div>
<div class="abs" style="left:1433.4px;top:590.3px;width:2.5px;height:27.4px;background:#c2ddf2;"></div>
<div class="t" style="left:1433.4px;width:123.6px;text-align:center;top:594.7px;color:#666">2%</div>
<div class="abs" style="left:1585.2px;top:590.3px;width:122.3px;height:27.4px;background:#f5f5f5;"></div>
<div class="abs" style="left:1585.2px;top:590.3px;width:17px;height:27.4px;background:#c2ddf2;"></div>
<div class="t" style="left:1585.2px;width:122.3px;text-align:center;top:594.7px;color:#666">14%</div>
<div class="t" style="left:1700px;width:145px;text-align:right;top:595.7px">00:08:20</div>
<div class="abs" style="left:690px;top:654px;width:1170px;height:1px;background:#dedede;"></div>
<div class="t" style="left:703.6px;top:629.7px;">abra03</div>
<div class="t" style="left:1001px;top:629.7px;">3</div>
<svg style="left:1056.4px;top:631.5px;" width="15.5" height="12.5" viewBox="0 0 15.5 12.5"><path d="M1.2 6.6 L5.6 11 L14.6 2" fill="none" stroke="#21bf4b" stroke-width="3.4"/></svg>
<div class="t" style="left:1138.2px;top:630.9000000000001px;font-weight:bold">-</div>
<div class="t" style="left:1276.1px;top:629.7px;">10.26.2.3</div>
<div class="abs" style="left:1433.4px;top:624.3px;width:123.6px;height:27.4px;background:#f5f5f5;"></div>
<div class="abs" style="left:1433.4px;top:624.3px;width:2.5px;height:27.4px;background:#c2ddf2;"></div>
<div class="t" style="left:1433.4px;width:123.6px;text-align:center;top:628.7px;color:#666">2%</div>
<div class="abs" style="left:1585.2px;top:624.3px;width:122.3px;height:27.4px;background:#f5f5f5;"></div>
<div class="abs" style="left:1585.2px;top:624.3px;width:17px;height:27.4px;background:#c2ddf2;"></div>
<div class="t" style="left:1585.2px;width:122.3px;text-align:center;top:628.7px;color:#666">14%</div>
<div class="t" style="left:1700px;width:145px;text-align:right;top:629.7px">00:08:16</div>
<div class="abs" style="left:690px;top:655px;width:1170px;height:33px;background:#fafafa;"></div>
<div class="abs" style="left:690px;top:688px;width:1170px;height:1px;background:#dedede;"></div>
<div class="t" style="left:703.6px;top:663.7px;">abra04</div>
<div class="t" style="left:1001px;top:663.7px;">4</div>
<svg style="left:1056.4px;top:665.5px;" width="15.5" height="12.5" viewBox="0 0 15.5 12.5"><path d="M1.2 6.6 L5.6 11 L14.6 2" fill="none" stroke="#21bf4b" stroke-width="3.4"/></svg>
<div class="t" style="left:1138.2px;top:664.9000000000001px;font-weight:bold">-</div>
<div class="t" style="left:1276.1px;top:663.7px;">10.26.2.4</div>
<div class="abs" style="left:1433.4px;top:658.3px;width:123.6px;height:27.4px;background:#f5f5f5;"></div>
<div class="abs" style="left:1433.4px;top:658.3px;width:2.5px;height:27.4px;background:#c2ddf2;"></div>
<div class="t" style="left:1433.4px;width:123.6px;text-align:center;top:662.7px;color:#666">2%</div>
<div class="abs" style="left:1585.2px;top:658.3px;width:122.3px;height:27.4px;background:#f5f5f5;"></div>
<div class="abs" style="left:1585.2px;top:658.3px;width:14px;height:27.4px;background:#c2ddf2;"></div>
<div class="t" style="left:1585.2px;width:122.3px;text-align:center;top:662.7px;color:#666">12%</div>
<div class="t" style="left:1700px;width:145px;text-align:right;top:663.7px">00:08:21</div>
<div class="abs" style="left:690px;top:722px;width:1170px;height:1px;background:#dedede;"></div>
<div class="t" style="left:703.6px;top:697.7px;">abra05</div>
<div class="t" style="left:1001px;top:697.7px;">5</div>
<svg style="left:1056.4px;top:699.5px;" width="15.5" height="12.5" viewBox="0 0 15.5 12.5"><path d="M1.2 6.6 L5.6 11 L14.6 2" fill="none" stroke="#21bf4b" stroke-width="3.4"/></svg>
<div class="t" style="left:1138.2px;top:698.9000000000001px;font-weight:bold">-</div>
<div class="t" style="left:1276.1px;top:697.7px;">10.26.2.5</div>
<div class="abs" style="left:1433.4px;top:692.3px;width:123.6px;height:27.4px;background:#f5f5f5;"></div>
<div class="abs" style="left:1433.4px;top:692.3px;width:2.5px;height:27.4px;background:#c2ddf2;"></div>
<div class="t" style="left:1433.4px;width:123.6px;text-align:center;top:696.7px;color:#666">2%</div>
<div class="abs" style="left:1585.2px;top:692.3px;width:122.3px;height:27.4px;background:#f5f5f5;"></div>
<div class="abs" style="left:1585.2px;top:692.3px;width:14px;height:27.4px;background:#c2ddf2;"></div>
<div class="t" style="left:1585.2px;width:122.3px;text-align:center;top:696.7px;color:#666">12%</div>
<div class="t" style="left:1700px;width:145px;text-align:right;top:697.7px">00:08:22</div>
<div class="abs" style="left:690px;top:723px;width:1170px;height:33px;background:#fafafa;"></div>
<div class="abs" style="left:690px;top:756px;width:1170px;height:1px;background:#dedede;"></div>
<div class="t" style="left:703.6px;top:731.7px;">abra06</div>
<div class="t" style="left:1001px;top:731.7px;">6</div>
<svg style="left:1056.4px;top:733.5px;" width="15.5" height="12.5" viewBox="0 0 15.5 12.5"><path d="M1.2 6.6 L5.6 11 L14.6 2" fill="none" stroke="#21bf4b" stroke-width="3.4"/></svg>
<div class="t" style="left:1138.2px;top:732.9000000000001px;font-weight:bold">-</div>
<div class="t" style="left:1276.1px;top:731.7px;">10.26.2.6</div>
<div class="abs" style="left:1433.4px;top:726.3px;width:123.6px;height:27.4px;background:#f5f5f5;"></div>
<div class="abs" style="left:1433.4px;top:726.3px;width:2.5px;height:27.4px;background:#c2ddf2;"></div>
<div class="t" style="left:1433.4px;width:123.6px;text-align:center;top:730.7px;color:#666">1%</div>
<div class="abs" style="left:1585.2px;top:726.3px;width:122.3px;height:27.4px;background:#f5f5f5;"></div>
<div class="abs" style="left:1585.2px;top:726.3px;width:14px;height:27.4px;background:#c2ddf2;"></div>
<div class="t" style="left:1585.2px;width:122.3px;text-align:center;top:730.7px;color:#666">12%</div>
<div class="t" style="left:1700px;width:145px;text-align:right;top:731.7px">00:08:16</div>
<div class="abs" style="left:690px;top:790px;width:1170px;height:1px;background:#dedede;"></div>
<div class="t" style="left:703.6px;top:765.7px;">abra07</div>
<div class="t" style="left:1001px;top:765.7px;">7</div>
<svg style="left:1056.4px;top:767.5px;" width="15.5" height="12.5" viewBox="0 0 15.5 12.5"><path d="M1.2 6.6 L5.6 11 L14.6 2" fill="none" stroke="#21bf4b" stroke-width="3.4"/></svg>
<div class="t" style="left:1138.2px;top:766.9000000000001px;font-weight:bold">-</div>
<div class="t" style="left:1276.1px;top:765.7px;">10.26.2.7</div>
<div class="abs" style="left:1433.4px;top:760.3px;width:123.6px;height:27.4px;background:#f5f5f5;"></div>
<div class="abs" style="left:1433.4px;top:760.3px;width:2.5px;height:27.4px;background:#c2ddf2;"></div>
<div class="t" style="left:1433.4px;width:123.6px;text-align:center;top:764.7px;color:#666">1%</div>
<div class="abs" style="left:1585.2px;top:760.3px;width:122.3px;height:27.4px;background:#f5f5f5;"></div>
<div class="abs" style="left:1585.2px;top:760.3px;width:14px;height:27.4px;background:#c2ddf2;"></div>
<div class="t" style="left:1585.2px;width:122.3px;text-align:center;top:764.7px;color:#666">12%</div>
<div class="t" style="left:1700px;width:145px;text-align:right;top:765.7px">00:08:21</div>
<svg style="left:1864.5px;top:558.9px;" width="12" height="8.2" viewBox="0 0 12 8.2"><path d="M6 0.5 L11.5 7.7 H0.5 Z" fill="#8a8a8a" stroke="#8a8a8a" stroke-width="1" stroke-linejoin="round"/></svg>
<div class="abs" style="left:1865.5px;top:575px;width:10px;height:138px;background:#8a8a8a;border-radius:5px"></div>
<svg style="left:1864.5px;top:779.4px;" width="12" height="8.2" viewBox="0 0 12 8.2"><path d="M0.5 0.5 H11.5 L6 7.7 Z" fill="#8a8a8a" stroke="#8a8a8a" stroke-width="1" stroke-linejoin="round"/></svg>
<div class="abs" style="left:689px;top:806.5px;width:1190px;height:49.10000000000002px;background:#f5f5f5;"></div>
<div class="t" style="left:702.3px;top:821.5px;font-size:20.625px;color:#157fcc;">Subscriptions</div>
<div class="abs" style="left:689px;top:855.6px;width:1190px;height:40px;background:#fff;border:1px solid #d0d0d0;border-top:none"></div>
<div class="t" style="left:1134px;width:300px;text-align:center;top:877.5px;font-size:20.625px;font-weight:bold">No Subscription</div>
<div class="abs" style="left:1895px;top:97px;width:18px;height:785px;background:#fbfbfb;"></div>
<svg style="left:1898.5px;top:103px;" width="12.5" height="9" viewBox="0 0 12.5 9"><path d="M6.25 0.5 L12 8.5 H0.5 Z" fill="#8a8a8a" stroke="#8a8a8a" stroke-width="1" stroke-linejoin="round"/></svg>
<div class="abs" style="left:1899.5px;top:416px;width:10.5px;height:345px;background:#8a8a8a;border-radius:5px"></div>
<svg style="left:1898.5px;top:869.5px;" width="12.5" height="9" viewBox="0 0 12.5 9"><path d="M0.5 0.5 H12 L6.25 8.5 Z" fill="#8a8a8a" stroke="#8a8a8a" stroke-width="1" stroke-linejoin="round"/></svg>
<div class="abs" style="left:0px;top:882px;width:1919px;height:8px;background:#d0d0d0;"></div>
<div class="abs" style="left:927px;top:884px;width:66px;height:6px;background:#dcdcdc;border:1px solid #e6e6e6;border-bottom:none"></div>
<svg style="left:954px;top:886px;" width="13" height="4" viewBox="0 0 13 4"><path d="M0.5 0.5 L6.5 3.5 L12.5 0.5" fill="none" stroke="#c0c0c0" stroke-width="1.5"/></svg>
<div class="abs" style="left:8px;top:890px;width:1904px;height:181px;background:#fff;"></div>
<div class="abs" style="left:8px;top:890px;width:1904px;height:47px;background:#f5f5f5;"></div>
<div class="abs" style="left:8px;top:937px;width:1904px;height:1px;background:#d0d0d0;"></div>
<div class="abs" style="left:22px;top:899px;width:64px;height:30px;background:#3892d4;border-radius:3px"></div>
<div class="t" style="left:31.8px;top:906.3px;color:#fff;">Tasks</div>
<div class="t" style="left:110px;top:906.3px;">Cluster log</div>
<div class="abs" style="left:8px;top:938px;width:205px;height:40px;background:#eef5fb;"></div>
<div class="abs" style="left:8px;top:978px;width:1884px;height:1px;background:#d9d9d9;"></div>
<div class="abs" style="left:213.3px;top:938px;width:1px;height:40px;background:#e3e3e3;"></div>
<div class="abs" style="left:419px;top:938px;width:1px;height:40px;background:#e3e3e3;"></div>
<div class="abs" style="left:557px;top:938px;width:1px;height:40px;background:#e3e3e3;"></div>
<div class="abs" style="left:763px;top:938px;width:1px;height:40px;background:#e3e3e3;"></div>
<div class="abs" style="left:1577px;top:938px;width:1px;height:40px;background:#e3e3e3;"></div>
<div class="abs" style="left:1851.3px;top:938px;width:1px;height:40px;background:#e3e3e3;"></div>
<div class="abs" style="left:1892.5px;top:938px;width:1px;height:40px;background:#e3e3e3;"></div>
<div class="t" style="left:22px;top:949.5px;color:#666;">Start Time</div>
<div class="t" style="left:228.5px;top:949.5px;color:#666;">End Time</div>
<div class="t" style="left:434.5px;top:949.5px;color:#666;">Node</div>
<div class="t" style="left:572px;top:949.5px;color:#666;">User name</div>
<div class="t" style="left:778.5px;top:949.5px;color:#666;">Description</div>
<div class="t" style="left:1590.7px;top:949.5px;color:#666;">Status</div>
<svg style="left:107px;top:948px;" width="14" height="20" viewBox="0 0 14 20"><path d="M7 1 V18 M1.5 12.5 L7 18 L12.5 12.5" fill="none" stroke="#aaa" stroke-width="1.6"/></svg>
<div class="abs" style="left:8px;top:1013px;width:1885px;height:1px;background:#dedede;"></div>
<div class="t" style="left:22px;top:988.8px;">Sep 05 15:04:59</div>
<div class="t" style="left:228.5px;top:988.8px;">Sep 05 15:04:59</div>
<div class="t" style="left:434.5px;top:988.8px;">abra09</div>
<div class="t" style="left:572px;top:988.8px;">root@pam</div>
<div class="t" style="left:778.5px;top:988.8px;">Bulk start VMs and Containers</div>
<div class="t" style="left:1590.7px;top:988.8px;">OK</div>
<svg style="left:1866px;top:987px;" width="13" height="17" viewBox="0 0 13 17"><path d="M2.2 1.8 L10.4 8.7 L2.2 15.6" fill="none" stroke="#555" stroke-width="3.6"/></svg>
<div class="abs" style="left:8px;top:1014px;width:1885px;height:33px;background:#fafafa;"></div>
<div class="abs" style="left:8px;top:1047px;width:1885px;height:1px;background:#dedede;"></div>
<div class="t" style="left:22px;top:1022.8px;">Sep 05 15:04:58</div>
<div class="t" style="left:228.5px;top:1022.8px;">Sep 05 15:04:58</div>
<div class="t" style="left:434.5px;top:1022.8px;">abra01</div>
<div class="t" style="left:572px;top:1022.8px;">root@pam</div>
<div class="t" style="left:778.5px;top:1022.8px;">Bulk start VMs and Containers</div>
<div class="t" style="left:1590.7px;top:1022.8px;">OK</div>
<svg style="left:1866px;top:1021px;" width="13" height="17" viewBox="0 0 13 17"><path d="M2.2 1.8 L10.4 8.7 L2.2 15.6" fill="none" stroke="#555" stroke-width="3.6"/></svg>
<div class="t" style="left:22px;top:1056.8px;">Sep 05 15:04:58</div>
<div class="t" style="left:228.5px;top:1056.8px;">Sep 05 15:04:58</div>
<div class="t" style="left:434.5px;top:1056.8px;">abra05</div>
<div class="t" style="left:572px;top:1056.8px;">root@pam</div>
<div class="t" style="left:778.5px;top:1056.8px;">Bulk start VMs and Containers</div>
<div class="t" style="left:1590.7px;top:1056.8px;">OK</div>
<svg style="left:1866px;top:1055px;" width="13" height="17" viewBox="0 0 13 17"><path d="M2.2 1.8 L10.4 8.7 L2.2 15.6" fill="none" stroke="#555" stroke-width="3.6"/></svg>
<svg style="left:1898px;top:985px;" width="13.5" height="10" viewBox="0 0 13.5 10"><path d="M6.75 0.5 L13 9.5 H0.5 Z" fill="#8a8a8a" stroke="#8a8a8a" stroke-width="1" stroke-linejoin="round"/></svg>
<div class="abs" style="left:1899px;top:1002px;width:11px;height:20.5px;background:#8a8a8a;border-radius:5.5px"></div>
<svg style="left:1898px;top:1059px;" width="13.5" height="10" viewBox="0 0 13.5 10"><path d="M0.5 0.5 H13 L6.75 9.5 Z" fill="#8a8a8a" stroke="#8a8a8a" stroke-width="1" stroke-linejoin="round"/></svg>
<div class="abs" style="left:0px;top:1071px;width:1919px;height:8px;background:#d0d0d0;"></div>
</body></html>
